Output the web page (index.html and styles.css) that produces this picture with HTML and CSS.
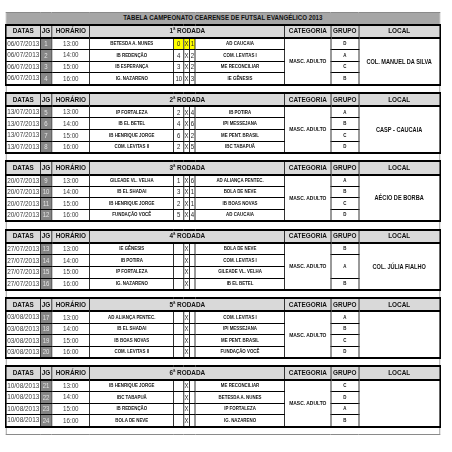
FILE: index.html
```html
<!DOCTYPE html>
<html lang="pt">
<head>
<meta charset="utf-8">
<title>Tabela Campeonato Cearense de Futsal Evangélico 2013</title>
<link rel="stylesheet" href="styles.css">
</head>
<body>
<div class="frame">
<table class="sheet">
<colgroup>
<col class="c-data"><col class="c-jg"><col class="c-hora"><col class="c-team1"><col class="c-s1"><col class="c-x"><col class="c-s2"><col class="c-team2"><col class="c-cat"><col class="c-grp"><col class="c-local">
</colgroup>
<tbody class="ttl">
<tr class="title"><td colspan="11">TABELA CAMPEONATO CEARENSE DE FUTSAL EVANGÉLICO 2013</td></tr>
</tbody>

<tbody class="blk">
<tr class="hdr"><td>DATAS</td><td>JG</td><td>HORÁRIO</td><td colspan="5">1ª RODADA</td><td>CATEGORIA</td><td>GRUPO</td><td>LOCAL</td></tr>
<tr class="row"><td class="date">06/07/2013</td><td class="jg">1</td><td class="time">13:00</td><td class="team">BETESDA A. NUNES</td><td class="sc hl">0</td><td class="sc hl">X</td><td class="sc hl">1</td><td class="team">AD CAUCAIA</td><td class="cat" rowspan="4">MASC. ADULTO</td><td class="grp">D</td><td class="local" rowspan="4">COL. MANUEL DA SILVA</td></tr>
<tr class="row"><td class="date">06/07/2013</td><td class="jg">2</td><td class="time">14:00</td><td class="team">IB REDENÇÃO</td><td class="sc">4</td><td class="sc">X</td><td class="sc">2</td><td class="team">COM. LEVITAS I</td><td class="grp">A</td></tr>
<tr class="row"><td class="date">06/07/2013</td><td class="jg">3</td><td class="time">15:00</td><td class="team">IB ESPERANÇA</td><td class="sc">3</td><td class="sc">X</td><td class="sc">2</td><td class="team">ME RECONCILIAR</td><td class="grp">C</td></tr>
<tr class="row"><td class="date">06/07/2013</td><td class="jg">4</td><td class="time">16:00</td><td class="team">IG. NAZARENO</td><td class="sc">10</td><td class="sc">X</td><td class="sc">3</td><td class="team">IE GÊNESIS</td><td class="grp">B</td></tr>
</tbody>
<tbody class="gap"><tr><td colspan="11"></td></tr></tbody>

<tbody class="blk">
<tr class="hdr"><td>DATAS</td><td>JG</td><td>HORÁRIO</td><td colspan="5">2ª RODADA</td><td>CATEGORIA</td><td>GRUPO</td><td>LOCAL</td></tr>
<tr class="row"><td class="date">13/07/2013</td><td class="jg">5</td><td class="time">13:00</td><td class="team">IP FORTALEZA</td><td class="sc">2</td><td class="sc">X</td><td class="sc">4</td><td class="team">IB POTIRA</td><td class="cat" rowspan="4">MASC. ADULTO</td><td class="grp">A</td><td class="local" rowspan="4">CASP - CAUCAIA</td></tr>
<tr class="row"><td class="date">13/07/2013</td><td class="jg">6</td><td class="time">14:00</td><td class="team">IB EL BETEL</td><td class="sc">4</td><td class="sc">X</td><td class="sc">6</td><td class="team">IPI MESSEJANA</td><td class="grp">B</td></tr>
<tr class="row"><td class="date">13/07/2013</td><td class="jg">7</td><td class="time">15:00</td><td class="team">IB HENRIQUE JORGE</td><td class="sc">6</td><td class="sc">X</td><td class="sc">2</td><td class="team">ME PENT. BRASIL</td><td class="grp">C</td></tr>
<tr class="row"><td class="date">13/07/2013</td><td class="jg">8</td><td class="time">16:00</td><td class="team">COM. LEVITAS II</td><td class="sc">2</td><td class="sc">X</td><td class="sc">5</td><td class="team">IBC TABAPUÃ</td><td class="grp">D</td></tr>
</tbody>
<tbody class="gap"><tr><td colspan="11"></td></tr></tbody>

<tbody class="blk">
<tr class="hdr"><td>DATAS</td><td>JG</td><td>HORÁRIO</td><td colspan="5">3ª RODADA</td><td>CATEGORIA</td><td>GRUPO</td><td>LOCAL</td></tr>
<tr class="row"><td class="date">20/07/2013</td><td class="jg">9</td><td class="time">13:00</td><td class="team">GILEADE VL. VELHA</td><td class="sc">1</td><td class="sc">X</td><td class="sc">6</td><td class="team">AD ALIANÇA PENTEC.</td><td class="cat" rowspan="4">MASC. ADULTO</td><td class="grp">A</td><td class="local" rowspan="4">AÉCIO DE BORBA</td></tr>
<tr class="row"><td class="date">20/07/2013</td><td class="jg">10</td><td class="time">14:00</td><td class="team">IB EL SHADAI</td><td class="sc">3</td><td class="sc">X</td><td class="sc">1</td><td class="team">BOLA DE NEVE</td><td class="grp">B</td></tr>
<tr class="row"><td class="date">20/07/2013</td><td class="jg">11</td><td class="time">15:00</td><td class="team">IB HENRIQUE JORGE</td><td class="sc">2</td><td class="sc">X</td><td class="sc">1</td><td class="team">IB BOAS NOVAS</td><td class="grp">C</td></tr>
<tr class="row"><td class="date">20/07/2013</td><td class="jg">12</td><td class="time">16:00</td><td class="team">FUNDAÇÃO VOCÊ</td><td class="sc">5</td><td class="sc">X</td><td class="sc">4</td><td class="team">AD CAUCAIA</td><td class="grp">D</td></tr>
</tbody>
<tbody class="gap"><tr><td colspan="11"></td></tr></tbody>

<tbody class="blk">
<tr class="hdr"><td>DATAS</td><td>JG</td><td>HORÁRIO</td><td colspan="5">4ª RODADA</td><td>CATEGORIA</td><td>GRUPO</td><td>LOCAL</td></tr>
<tr class="row"><td class="date">27/07/2013</td><td class="jg">13</td><td class="time">13:00</td><td class="team">IE GÊNESIS</td><td class="sc"></td><td class="sc">X</td><td class="sc"></td><td class="team">BOLA DE NEVE</td><td class="cat" rowspan="4">MASC. ADULTO</td><td class="grp">B</td><td class="local" rowspan="4">COL. JÚLIA FIALHO</td></tr>
<tr class="row"><td class="date">27/07/2013</td><td class="jg">14</td><td class="time">14:00</td><td class="team">IB POTIRA</td><td class="sc"></td><td class="sc">X</td><td class="sc"></td><td class="team">COM. LEVITAS I</td><td class="grp" rowspan="2">A</td></tr>
<tr class="row"><td class="date">27/07/2013</td><td class="jg">15</td><td class="time">15:00</td><td class="team">IP FORTALEZA</td><td class="sc"></td><td class="sc">X</td><td class="sc"></td><td class="team">GILEADE VL. VELHA</td></tr>
<tr class="row"><td class="date">27/07/2013</td><td class="jg">16</td><td class="time">16:00</td><td class="team">IG. NAZARENO</td><td class="sc"></td><td class="sc">X</td><td class="sc"></td><td class="team">IB EL BETEL</td><td class="grp">B</td></tr>
</tbody>
<tbody class="gap"><tr><td colspan="11"></td></tr></tbody>

<tbody class="blk">
<tr class="hdr"><td>DATAS</td><td>JG</td><td>HORÁRIO</td><td colspan="5">5ª RODADA</td><td>CATEGORIA</td><td>GRUPO</td><td>LOCAL</td></tr>
<tr class="row"><td class="date">03/08/2013</td><td class="jg">17</td><td class="time">13:00</td><td class="team">AD ALIANÇA PENTEC.</td><td class="sc"></td><td class="sc">X</td><td class="sc"></td><td class="team">COM. LEVITAS I</td><td class="cat" rowspan="4">MASC. ADULTO</td><td class="grp">A</td><td class="local" rowspan="4"></td></tr>
<tr class="row"><td class="date">03/08/2013</td><td class="jg">18</td><td class="time">14:00</td><td class="team">IB EL SHADAI</td><td class="sc"></td><td class="sc">X</td><td class="sc"></td><td class="team">IPI MESSEJANA</td><td class="grp">B</td></tr>
<tr class="row"><td class="date">03/08/2013</td><td class="jg">19</td><td class="time">15:00</td><td class="team">IB BOAS NOVAS</td><td class="sc"></td><td class="sc">X</td><td class="sc"></td><td class="team">ME PENT. BRASIL</td><td class="grp">C</td></tr>
<tr class="row"><td class="date">03/08/2013</td><td class="jg">20</td><td class="time">16:00</td><td class="team">COM. LEVITAS II</td><td class="sc"></td><td class="sc">X</td><td class="sc"></td><td class="team">FUNDAÇÃO VOCÊ</td><td class="grp">D</td></tr>
</tbody>
<tbody class="gap"><tr><td colspan="11"></td></tr></tbody>

<tbody class="blk">
<tr class="hdr"><td>DATAS</td><td>JG</td><td>HORÁRIO</td><td colspan="5">6ª RODADA</td><td>CATEGORIA</td><td>GRUPO</td><td>LOCAL</td></tr>
<tr class="row"><td class="date">10/08/2013</td><td class="jg">21</td><td class="time">13:00</td><td class="team">IB HENRIQUE JORGE</td><td class="sc"></td><td class="sc">X</td><td class="sc"></td><td class="team">ME RECONCILIAR</td><td class="cat" rowspan="4">MASC. ADULTO</td><td class="grp">C</td><td class="local" rowspan="4"></td></tr>
<tr class="row"><td class="date">10/08/2013</td><td class="jg">22</td><td class="time">14:00</td><td class="team">IBC TABAPUÃ</td><td class="sc"></td><td class="sc">X</td><td class="sc"></td><td class="team">BETESDA A. NUNES</td><td class="grp">D</td></tr>
<tr class="row"><td class="date">10/08/2013</td><td class="jg">23</td><td class="time">15:00</td><td class="team">IB REDENÇÃO</td><td class="sc"></td><td class="sc">X</td><td class="sc"></td><td class="team">IP FORTALEZA</td><td class="grp">A</td></tr>
<tr class="row"><td class="date">10/08/2013</td><td class="jg">24</td><td class="time">16:00</td><td class="team">BOLA DE NEVE</td><td class="sc"></td><td class="sc">X</td><td class="sc"></td><td class="team">IG. NAZARENO</td><td class="grp">B</td></tr>
</tbody>
<tbody class="gap"><tr><td colspan="11"></td></tr></tbody>
</table>
</div>
</body>
</html>
```
FILE: styles.css
```css
html, body {
  margin: 0;
  padding: 0;
  background: #ffffff;
  overflow: hidden;
}

body {
  font-family: "Liberation Sans", Arial, sans-serif;
  color: #111111;
}

.frame {
  width: 452px;
  height: 452px;
  overflow: hidden;
}

/* The sheet is laid out 1.25x wide and condensed horizontally,
   which imitates the narrow spreadsheet typeface. */
.sheet {
  border-collapse: collapse;
  table-layout: fixed;
  width: 542.5px;
  margin: 12px 0 0 5px;
  border: 1px solid #8a8a8a;
  transform: scaleX(0.8);
  transform-origin: 0 0;
}

.c-data { width: 43.1px; }
.c-jg { width: 14.4px; }
.c-hora { width: 47.5px; }
.c-team1 { width: 105px; }
.c-s1 { width: 12.5px; }
.c-x { width: 6.9px; }
.c-s2 { width: 7.5px; }
.c-team2 { width: 111.9px; }
.c-cat { width: 57.5px; }
.c-grp { width: 35px; }
.c-local { width: 101.2px; }

.sheet td {
  padding: 0;
  text-align: center;
  vertical-align: middle;
  line-height: 1;
  white-space: nowrap;
  overflow: hidden;
  border: 1px solid #000000;
}

.blk {
  border: 2px solid #000000;
}

.title {
  height: 12px;
}

.title td {
  background: #a6a6a6;
  border: 1px solid #8a8a8a;
  font-weight: bold;
  font-size: 7.7px;
}

.hdr {
  height: 13.3px;
}

.hdr td {
  background: #d9d9d9;
  border-bottom: 2px solid #000000;
  font-weight: bold;
  font-size: 8px;
}

.row {
  height: 11.7px;
}

.gap tr {
  height: 8.35px;
}

.gap td {
  border: none;
}

.date {
  font-size: 8px;
  color: #404040;
  text-align: right;
  padding-right: 0.5px;
}

.jg {
  background: #868686;
  color: #e4e4e4;
  font-size: 7.5px;
}

.time {
  font-size: 7.8px;
  color: #404040;
}

.team {
  font-size: 5.5px;
  font-weight: bold;
}

.sc {
  font-size: 7.5px;
  color: #222222;
}

.hl {
  background: #ffff00;
}

.cat {
  font-size: 6.2px;
  font-weight: bold;
}

.grp {
  font-size: 5.5px;
  font-weight: bold;
}

.local {
  font-size: 7px;
  font-weight: bold;
}
```
